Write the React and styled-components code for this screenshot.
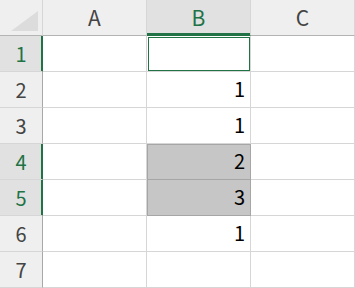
import React from "react";
import styled, { createGlobalStyle, css } from "styled-components";

const GREEN = "#217346";

const Global = createGlobalStyle`
  html, body { margin: 0; padding: 0; background: #ffffff; }
  body { font-family: "Noto Sans CJK JP", "Noto Sans", sans-serif; }
`;

const Sheet = styled.div`
  display: grid;
  grid-template-columns: 43px repeat(3, 104px);
  grid-auto-rows: 36px;
  width: 355px;
  height: 288px;
  overflow: hidden;
`;

const Corner = styled.div`
  background: #efefef;
  border-right: 1px solid #d6d6d6;
  border-bottom: 1px solid #b4b4b4;
  display: flex;
  align-items: flex-end;
  justify-content: flex-end;
  padding: 0 4px 4px 0;
  box-sizing: border-box;
`;

const ColHead = styled.div`
  box-sizing: border-box;
  background: ${(p) => (p.$active ? "#e1e1e1" : "#efefef")};
  border-right: 1px solid #d6d6d6;
  border-bottom: 1px solid #b4b4b4;
  color: ${(p) => (p.$active ? GREEN : "#444444")};
  font-size: 21px;
  display: flex;
  align-items: center;
  justify-content: center;
  line-height: 1;
  padding-bottom: 1px;
  ${(p) =>
    p.$active &&
    css`
      box-shadow: inset 0 -2px 0 ${GREEN};
      border-bottom-color: ${GREEN};
    `}
`;

const RowHead = styled.div`
  box-sizing: border-box;
  background: ${(p) => (p.$active ? "#e1e1e1" : "#efefef")};
  border-right: 1px solid ${(p) => (p.$active ? GREEN : "#a8a8a8")};
  border-bottom: 1px solid #d6d6d6;
  color: ${(p) => (p.$active ? GREEN : "#444444")};
  font-size: 20px;
  display: flex;
  align-items: center;
  justify-content: center;
  line-height: 1;
  ${(p) =>
    p.$active &&
    css`
      box-shadow: inset -1px 0 0 ${GREEN};
    `}
`;

const Cell = styled.div`
  box-sizing: border-box;
  position: relative;
  background: ${(p) => (p.$selected ? "#c6c6c6" : "#ffffff")};
  border-right: 1px solid ${(p) => (p.$selected ? "#a6a6a6" : "#d6d6d6")};
  border-bottom: 1px solid ${(p) => (p.$selected ? "#a6a6a6" : "#d6d6d6")};
  color: #000000;
  font-size: 20px;
  line-height: 1;
  display: flex;
  align-items: center;
  justify-content: flex-end;
  padding: 0 5px 1px 0;
  ${(p) =>
    p.$selected &&
    css`
      box-shadow: inset 1px 0 0 #a6a6a6 ${p.$top ? ", inset 0 1px 0 #a6a6a6" : ""};
    `}
`;

const ActiveBox = styled.div`
  position: absolute;
  left: 1px;
  top: 1px;
  right: 0;
  bottom: 0;
  border: 1.5px solid ${GREEN};
`;

const cols = ["A", "B", "C"];
const data = {
  1: { B: "" },
  2: { B: "1" },
  3: { B: "1" },
  4: { B: "2" },
  5: { B: "3" },
  6: { B: "1" },
  7: {},
};
const activeRows = [1, 4, 5];

export default function App() {
  return (
    <>
      <Global />
      <Sheet>
        <Corner>
          <svg width="27" height="20" viewBox="0 0 27 20">
            <polygon points="27,0 27,20 0,20" fill="#dcdcdc" />
          </svg>
        </Corner>
        {cols.map((c) => (
          <ColHead key={c} $active={c === "B"}>
            {c}
          </ColHead>
        ))}
        {[1, 2, 3, 4, 5, 6, 7].map((r) => (
          <React.Fragment key={r}>
            <RowHead $active={activeRows.includes(r)}>{r}</RowHead>
            {cols.map((c) => {
              const selected = c === "B" && (r === 4 || r === 5);
              return (
                <Cell key={c} $selected={selected} $top={r === 4}>
                  {data[r][c] || ""}
                  {c === "B" && r === 1 && <ActiveBox />}
                </Cell>
              );
            })}
          </React.Fragment>
        ))}
      </Sheet>
    </>
  );
}
